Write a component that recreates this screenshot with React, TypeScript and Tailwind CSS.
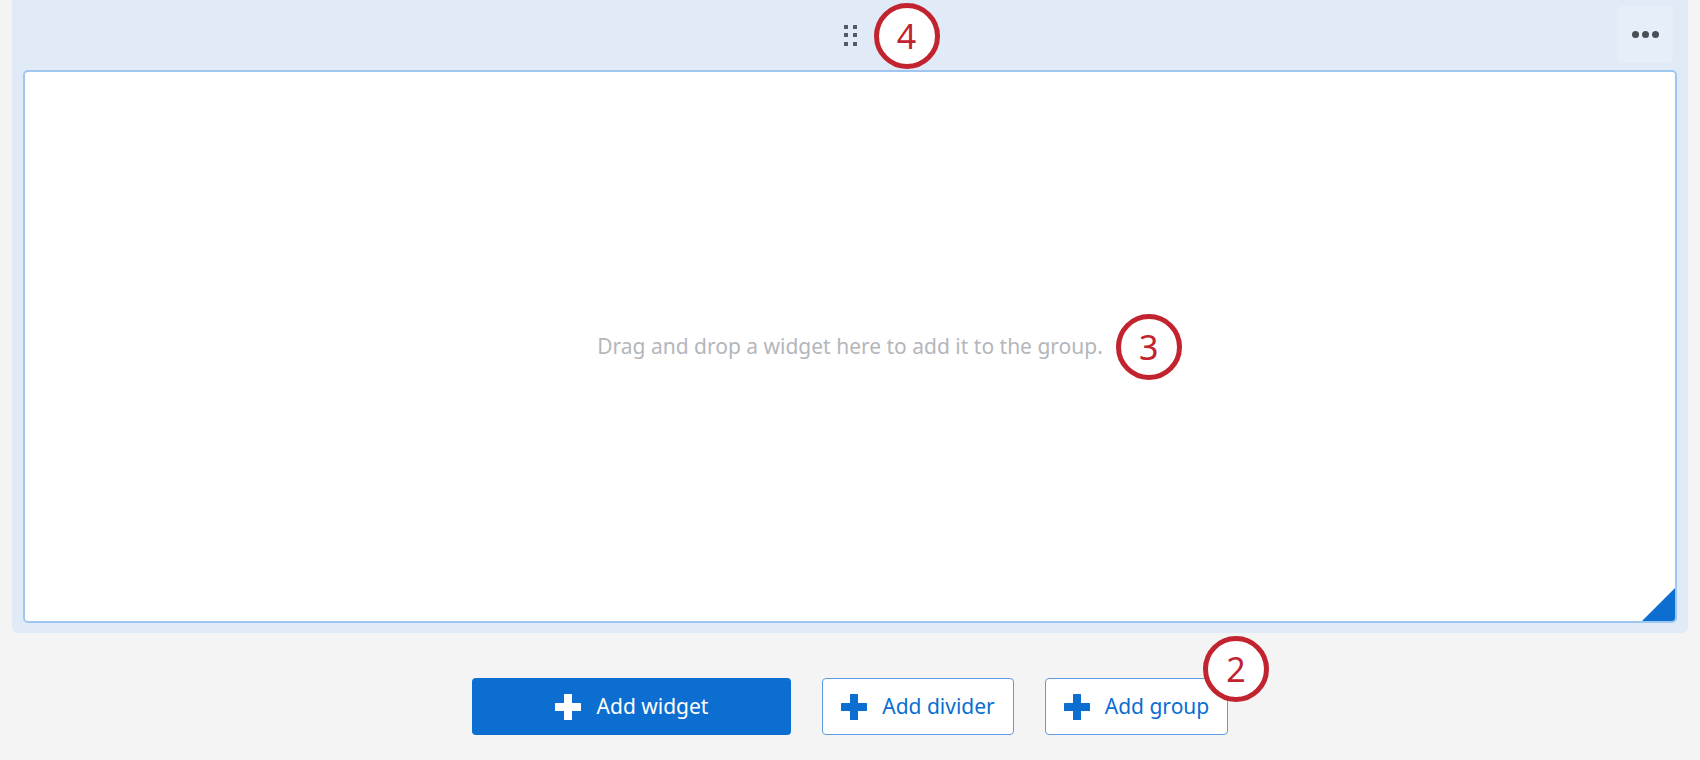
import React from "react"

const Marker = ({ n, className }: { n: number; className: string }) => (
  <div
    className={`absolute flex h-[66px] w-[66px] items-center justify-center rounded-full border-[5px] border-[#c1232f] bg-white text-[34px] leading-none text-[#c1232f] ${className}`}
  >
    {n}
  </div>
)

const Plus = ({ color }: { color: string }) => (
  <svg width="26" height="26" viewBox="0 0 26 26" className="shrink-0">
    <rect x="9" y="0" width="8" height="26" rx="0.5" fill={color} />
    <rect x="0" y="9" width="26" height="8" rx="0.5" fill={color} />
  </svg>
)

const App = () => {
  return (
    <div className="min-h-screen bg-[#f4f4f4] font-['Noto_Sans',sans-serif]">
      <div className="mx-3 rounded-b-[6px] bg-[#e0ebf7] px-[11px] pb-[10px]">
        {/* header */}
        <div className="relative flex h-[70px] items-center justify-center">
          <div className="relative">
            <div className="grid grid-cols-2 gap-x-[5px] gap-y-[4.5px]">
              {[0, 1, 2, 3, 4, 5].map((i) => (
                <span key={i} className="h-[4px] w-[4px] bg-[#555b63]" />
              ))}
            </div>
            <Marker n={4} className="left-[30px] top-[-22px]" />
          </div>
          <button className="absolute right-[4px] top-[6px] flex h-[57px] w-[56px] items-center justify-center gap-[3px] rounded-md bg-[#e5eef9]">
            <span className="h-[7px] w-[7px] rounded-full bg-[#4a4f56]" />
            <span className="h-[7px] w-[7px] rounded-full bg-[#4a4f56]" />
            <span className="h-[7px] w-[7px] rounded-full bg-[#4a4f56]" />
          </button>
        </div>

        {/* drop zone */}
        <div className="relative flex h-[553px] items-center justify-center overflow-hidden rounded-[5px] border-2 border-[#9fc6f0] bg-white">
          <span className="relative text-[21px] text-[#b4b6bc]">
            Drag and drop a widget here to add it to the group.
            <Marker n={3} className="left-[calc(100%+13px)] top-[-17px]" />
          </span>
          <div className="absolute bottom-0 right-0 h-[33px] w-[33px] bg-[#0b6ed0] [clip-path:polygon(100%_0,100%_100%,0_100%)]" />
        </div>
      </div>

      {/* actions */}
      <div className="mt-[45px] flex justify-center gap-[31px]">
        <button className="flex h-[57px] w-[319px] items-center justify-center gap-[16px] rounded-[4px] bg-[#0b6ed0] text-[21px] text-white">
          <Plus color="#ffffff" />
          <span>Add widget</span>
        </button>
        <button className="flex h-[57px] w-[192px] items-center justify-center gap-[15px] rounded-[4px] border border-[#5d9ce2] bg-white text-[21px] text-[#0b6ed0]">
          <Plus color="#0b6ed0" />
          <span>Add divider</span>
        </button>
        <div className="relative">
          <button className="flex h-[57px] w-[183px] items-center justify-center gap-[15px] rounded-[4px] border border-[#5d9ce2] bg-white text-[21px] text-[#0b6ed0]">
            <Plus color="#0b6ed0" />
            <span>Add group</span>
          </button>
          <Marker n={2} className="left-[158px] top-[-42px]" />
        </div>
      </div>
    </div>
  )
}

export default App
